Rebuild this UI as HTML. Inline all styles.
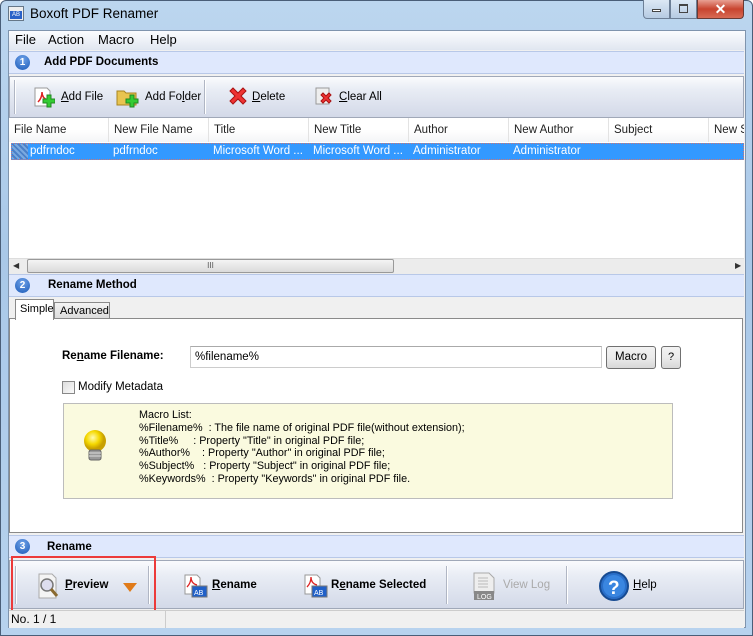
<!DOCTYPE html>
<html><head><meta charset="utf-8"><style>
*{margin:0;padding:0;box-sizing:border-box}
body{width:753px;height:636px;overflow:hidden;font-family:"Liberation Sans",sans-serif;font-size:11px;color:#000;background:#fff;position:relative}
.a{position:absolute}
.frame{left:0;top:0;width:753px;height:636px;background:linear-gradient(#bcd6ef,#a9c8e8 40%,#b7d2ee);border:1px solid #4a5e78;border-radius:6px 6px 0 0}
.client{left:8px;top:30px;width:738px;height:598px;background:#f0f0f0;border:1px solid #7f94ad}
.sec{height:23px;background:#dfe8fd;border-top:1px solid #b8c8e8;border-bottom:1px solid #b8c8e8;font-weight:bold;font-size:11.5px}
.num{position:absolute;left:6px;top:3px;width:15px;height:15px;border-radius:50%;background:radial-gradient(circle at 50% 30%,#6fa2e8,#1b5ab8);color:#fff;font-size:10px;text-align:center;line-height:15px;font-weight:bold}
.tb{background:linear-gradient(#fafbfd,#e9edf5 30%,#d3d9e8);border:1px solid #a0a8b8}
.sep{position:absolute;width:2px;background:#b0b6c4;border-right:1px solid #fff}
.btn{position:absolute;font-size:11.5px}
u{text-decoration:underline}
.hdr{position:absolute;top:0;height:24px;line-height:24px;padding-left:5px;border-right:1px solid #e3e3e3;font-size:11.5px;color:#222;white-space:nowrap;overflow:hidden}
.cell{position:absolute;color:#fff;font-size:11.5px}
</style></head><body>
<div class="a frame"></div>
<div class="a" style="left:8px;top:6px;width:16px;height:15px;background:#eee;border:1px solid #678"><div style="margin:4px 1px 0;height:8px;background:#2a62c8;color:#fff;font-size:6px;line-height:8px;text-align:center">AB</div></div>
<div class="a" style="left:30px;top:6px;font-size:13.5px;color:#000">Boxoft PDF Renamer</div>
<div class="a" style="left:643px;top:0;width:27px;height:19px;border:1px solid #6d7f96;border-top:none;border-radius:0 0 0 4px;background:linear-gradient(#dce8f5,#b6cbe3)"><div style="margin:9px 8px;height:3px;border:1px solid #444;background:#fff"></div></div>
<div class="a" style="left:670px;top:0;width:27px;height:19px;border:1px solid #6d7f96;border-top:none;background:linear-gradient(#dce8f5,#b6cbe3)"><div style="margin:4px 8px;height:9px;border:1px solid #444;border-top-width:2px"></div></div>
<div class="a" style="left:697px;top:0;width:47px;height:19px;border:1px solid #6a3a35;border-top:none;border-radius:0 0 4px 0;background:linear-gradient(#e8a093,#c8442f 50%,#d86a55);color:#fff;text-align:center;font-weight:bold;font-size:14px;line-height:18px">✕</div>
<div class="a client"></div>
<div class="a" style="left:9px;top:31px;width:736px;height:19px;background:linear-gradient(#fbfcfe,#e0e6f0)"></div>
<div class="a" style="left:15px;top:32px;font-size:13px">File</div>
<div class="a" style="left:48px;top:32px;font-size:13px">Action</div>
<div class="a" style="left:98px;top:32px;font-size:13px">Macro</div>
<div class="a" style="left:150px;top:32px;font-size:13px">Help</div>
<div class="a sec" style="left:9px;top:51px;width:735px"><div class="num">1</div><div class="a" style="left:35px;top:4px">Add PDF Documents</div></div>
<div class="a tb" style="left:9px;top:76px;width:735px;height:42px"></div>
<div class="sep" style="left:14px;top:80px;height:34px"></div>
<div class="sep" style="left:204px;top:80px;height:34px"></div>
<svg class="a" style="left:33px;top:86px" width="22" height="22"><path d="M2 2h12l3 3v15H2z" fill="#fff" stroke="#999"/><path d="M5 16c3-3 4-7 4-10 0 4 2 7 6 8" fill="none" stroke="#d22" stroke-width="1.5"/><path d="M14 9h4v4h4v4h-4v4h-4v-4h-4v-4h4z" fill="#3c3" stroke="#282"/></svg>
<div class="btn" style="left:61px;top:91px"><u>A</u>dd File</div>
<svg class="a" style="left:116px;top:86px" width="24" height="22"><path d="M1 5h7l2 2h10v12H1z" fill="#e8c450" stroke="#a88520"/><path d="M14 9h4v4h4v4h-4v4h-4v-4h-4v-4h4z" fill="#3c3" stroke="#282"/></svg>
<div class="btn" style="left:145px;top:91px">Add Fo<u>l</u>der</div>
<svg class="a" style="left:227px;top:86px" width="22" height="22"><path d="M3 5l3-3 5 5 5-5 3 3-5 5 5 5-3 3-5-5-5 5-3-3 5-5z" fill="#e33" stroke="#a11"/></svg>
<div class="btn" style="left:252px;top:91px"><u>D</u>elete</div>
<svg class="a" style="left:314px;top:86px" width="22" height="22"><rect x="2" y="2" width="13" height="16" fill="#eee" stroke="#999"/><path d="M7 9l2-2 3 3 3-3 2 2-3 3 3 3-2 2-3-3-3 3-2-2 3-3z" fill="#e33" stroke="#a11"/></svg>
<div class="btn" style="left:339px;top:91px"><u>C</u>lear All</div>
<div class="a" style="left:9px;top:118px;width:735px;height:140px;background:#fff"></div>
<div class="a" style="left:9px;top:118px;width:735px;height:24px;background:linear-gradient(#fff,#fff 50%,#f4f5f7)">
<div class="hdr" style="left:0;width:100px">File Name</div>
<div class="hdr" style="left:100px;width:100px">New File Name</div>
<div class="hdr" style="left:200px;width:100px">Title</div>
<div class="hdr" style="left:300px;width:100px">New Title</div>
<div class="hdr" style="left:400px;width:100px">Author</div>
<div class="hdr" style="left:500px;width:100px">New Author</div>
<div class="hdr" style="left:600px;width:100px">Subject</div>
<div class="hdr" style="left:700px;width:35px;border:none">New Subject</div>
</div>
<div class="a" style="left:11px;top:143px;width:733px;height:17px;background:#3399ff;border:1px dotted #c77"></div>
<div class="a" style="left:12px;top:144px;width:16px;height:15px;background:repeating-linear-gradient(45deg,#7aa9e0 0 2px,#4b80c8 2px 4px)"></div>
<div class="cell" style="left:30px;top:145px">pdfrndoc</div>
<div class="cell" style="left:113px;top:145px">pdfrndoc</div>
<div class="cell" style="left:213px;top:145px">Microsoft Word ...</div>
<div class="cell" style="left:313px;top:145px">Microsoft Word ...</div>
<div class="cell" style="left:413px;top:145px">Administrator</div>
<div class="cell" style="left:513px;top:145px">Administrator</div>
<div class="a" style="left:9px;top:258px;width:735px;height:16px;background:#ececec;border-top:1px solid #ddd"></div>
<div class="a" style="left:13px;top:261px;font-size:8px;color:#333">◀</div>
<div class="a" style="left:27px;top:259px;width:367px;height:14px;border:1px solid #999;border-radius:2px;background:linear-gradient(#f4f4f4,#dadada);text-align:center;font-size:8px;line-height:12px;color:#555">III</div>
<div class="a" style="left:735px;top:261px;font-size:8px;color:#333">▶</div>
<div class="a sec" style="left:9px;top:274px;width:735px"><div class="num">2</div><div class="a" style="left:39px;top:4px">Rename Method</div></div>
<div class="a" style="left:9px;top:318px;width:734px;height:215px;background:#fff;border:1px solid #8a8a8a"></div>
<div class="a" style="left:15px;top:299px;width:39px;height:21px;background:#fff;border:1px solid #8a8a8a;border-bottom:none;padding:3px 0 0 4px;font-size:11px">Simple</div>
<div class="a" style="left:54px;top:302px;width:56px;height:17px;background:linear-gradient(#f4f4f4,#dcdcdc);border:1px solid #8a8a8a;padding:2px 0 0 5px;font-size:11px">Advanced</div>
<div class="a" style="left:62px;top:350px;font-weight:bold;font-size:11.5px">Re<u>n</u>ame Filename:</div>
<div class="a" style="left:190px;top:346px;width:412px;height:22px;border:1px solid #ccc;border-top-color:#aaa;padding:4px 4px;font-size:11.5px">%filename%</div>
<div class="a" style="left:606px;top:346px;width:50px;height:23px;border:1px solid #707070;border-radius:3px;background:linear-gradient(#f2f2f2,#ebebeb 50%,#d8d8d8);text-align:center;line-height:21px;font-size:11.5px">Macro</div>
<div class="a" style="left:661px;top:346px;width:20px;height:23px;border:1px solid #707070;border-radius:3px;background:linear-gradient(#f2f2f2,#ebebeb 50%,#d8d8d8);text-align:center;line-height:21px">?</div>
<div class="a" style="left:62px;top:381px;width:13px;height:13px;border:1px solid #888;background:linear-gradient(135deg,#ddd,#fafafa)"></div>
<div class="a" style="left:78px;top:381px;font-size:11.5px">Modify Metadata</div>
<div class="a" style="left:63px;top:403px;width:610px;height:96px;background:#fafadf;border:1px solid #bcbcbc"></div>
<svg class="a" style="left:80px;top:428px" width="30" height="38"><defs><radialGradient id="g" cx="40%" cy="35%"><stop offset="0" stop-color="#fffbb0"/><stop offset=".6" stop-color="#f5d800"/><stop offset="1" stop-color="#c8a000"/></radialGradient></defs><circle cx="15" cy="13" r="11" fill="url(#g)"/><rect x="9" y="22" width="12" height="10" rx="2" fill="#999" stroke="#666"/><path d="M9 25h12M9 28h12" stroke="#ddd"/></svg>
<div class="a" style="left:139px;top:409px;font-size:10.8px;line-height:12.8px;white-space:pre">Macro List:
%Filename%  : The file name of original PDF file(without extension);
%Title%     : Property "Title" in original PDF file;
%Author%    : Property "Author" in original PDF file;
%Subject%   : Property "Subject" in original PDF file;
%Keywords%  : Property "Keywords" in original PDF file.</div>
<div class="a sec" style="left:9px;top:535px;width:735px"><div class="num">3</div><div class="a" style="left:38px;top:5px">Rename</div></div>
<div class="a tb" style="left:9px;top:560px;width:735px;height:49px"></div>
<div class="sep" style="left:15px;top:566px;height:38px"></div>
<div class="sep" style="left:148px;top:566px;height:38px"></div>
<div class="sep" style="left:446px;top:566px;height:38px"></div>
<div class="sep" style="left:566px;top:566px;height:38px"></div>
<svg class="a" style="left:36px;top:572px" width="26" height="28"><path d="M3 2h13l4 4v20H3z" fill="#f4f4f4" stroke="#aaa"/><circle cx="11" cy="13" r="6" fill="#dde" stroke="#777" stroke-width="1.5"/><path d="M15 17l6 7" stroke="#8a6a30" stroke-width="3"/></svg>
<div class="btn" style="left:65px;top:579px;font-weight:bold"><u>P</u>review</div>
<div class="a" style="left:123px;top:583px;width:0;height:0;border-left:7px solid transparent;border-right:7px solid transparent;border-top:9px solid #e07b1a"></div>
<div class="a" style="left:11px;top:556px;width:145px;height:57px;border:2px solid #ec3a3a"></div>
<svg class="a" style="left:183px;top:573px" width="26" height="26"><path d="M2 2h12l3 3v16H2z" fill="#fff" stroke="#999"/><path d="M4 14c3-3 4-7 4-10 0 4 2 7 6 8" fill="none" stroke="#d22" stroke-width="1.3"/><rect x="9" y="13" width="15" height="11" fill="#2060c8" stroke="#777"/><text x="11" y="22" font-size="7" fill="#fff" font-family="Liberation Sans">AB</text></svg>
<div class="btn" style="left:212px;top:579px;font-weight:bold"><u>R</u>ename</div>
<svg class="a" style="left:303px;top:573px" width="26" height="26"><path d="M2 2h12l3 3v16H2z" fill="#fff" stroke="#999"/><path d="M4 14c3-3 4-7 4-10 0 4 2 7 6 8" fill="none" stroke="#d22" stroke-width="1.3"/><rect x="9" y="13" width="15" height="11" fill="#2060c8" stroke="#777"/><text x="11" y="22" font-size="7" fill="#fff" font-family="Liberation Sans">AB</text></svg>
<div class="btn" style="left:331px;top:579px;font-weight:bold">R<u>e</u>name Selected</div>
<svg class="a" style="left:472px;top:571px" width="26" height="30"><path d="M2 2h15l5 5v15H2z" fill="#eee" stroke="#aaa"/><path d="M6 7h10M6 10h10M6 13h10M6 16h10" stroke="#bbb"/><rect x="2" y="20" width="20" height="9" fill="#888"/><text x="5" y="28" font-size="7" fill="#fff" font-family="Liberation Sans">LOG</text></svg>
<div class="btn" style="left:503px;top:579px;color:#aaa">View Log</div>
<svg class="a" style="left:598px;top:570px" width="32" height="32"><circle cx="16" cy="16" r="14" fill="#2a6fc9" stroke="#174b92" stroke-width="2"/><circle cx="16" cy="16" r="11" fill="#3a86e0"/><text x="10" y="24" font-size="19" font-weight="bold" fill="#fff" font-family="Liberation Sans">?</text></svg>
<div class="btn" style="left:633px;top:579px"><u>H</u>elp</div>
<div class="a" style="left:9px;top:610px;width:735px;height:18px;background:#f0f0f0;border-top:1px solid #ccc"></div>
<div class="a" style="left:165px;top:611px;width:1px;height:17px;background:#ccc"></div>
<div class="a" style="left:11px;top:612px;font-size:12px">No. 1 / 1</div>
</body></html>
